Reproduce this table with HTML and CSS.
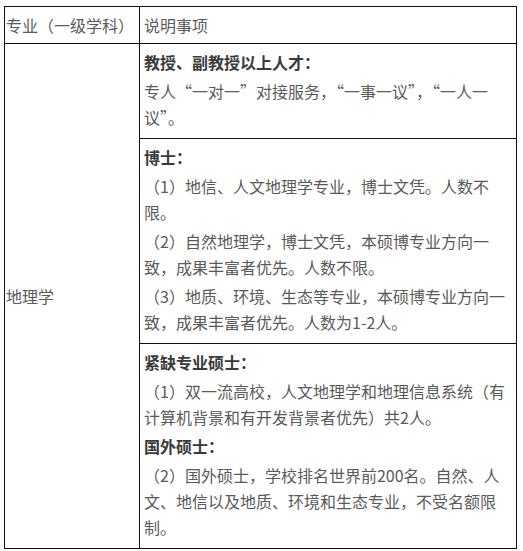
FILE: index.html
```html
<!DOCTYPE html>
<html lang="zh-CN">
<head>
<meta charset="utf-8">
<title>地理学</title>
<link rel="stylesheet" href="styles.css">
</head>
<body>
<table class="info">
  <tr>
    <td class="major">专业（一级学科）</td>
    <td class="desc">说明事项</td>
  </tr>
  <tr>
    <td class="major mid" rowspan="3">地理学</td>
    <td class="desc">
      <p class="head">教授、副教授以上人才：</p>
      <p>专人“一对一”对接服务，“一事一议”，“一人一议”。</p>
    </td>
  </tr>
  <tr>
    <td class="desc">
      <p class="head">博士：</p>
      <p>（1）地信、人文地理学专业，博士文凭。人数不限。</p>
      <p>（2）自然地理学，博士文凭，本硕博专业方向一致，成果丰富者优先。人数不限。</p>
      <p>（3）地质、环境、生态等专业，本硕博专业方向一致，成果丰富者优先。人数为1-2人。</p>
    </td>
  </tr>
  <tr>
    <td class="desc">
      <p class="head">紧缺专业硕士：</p>
      <p>（1）双一流高校，人文地理学和地理信息系统（有计算机背景和有开发背景者优先）共2人。</p>
      <p class="head">国外硕士：</p>
      <p>（2）国外硕士，学校排名世界前200名。自然、人文、地信以及地质、环境和生态专业，不受名额限制。</p>
    </td>
  </tr>
</table>
</body>
</html>
```
FILE: styles.css
```css
html, body {
  background: #fff;
}
body {
  margin: 6px 0 0 4px;
  font-family: "Noto Sans CJK SC", "Noto Sans", sans-serif;
  font-size: 16px;
  line-height: 26px;
  color: #5a5a5a;
}
.info {
  border-collapse: collapse;
  width: 513px;
  table-layout: fixed;
}
.info td {
  border: 1px solid #111;
  padding: 5px 4px;
  vertical-align: top;
}
.major {
  width: 129px;
  padding-left: 1px !important;
}
.mid {
  vertical-align: middle !important;
}
.desc p {
  margin: 0 0 3px;
}
.desc .head {
  font-weight: 700;
  color: #3a3a3a;
}
```
